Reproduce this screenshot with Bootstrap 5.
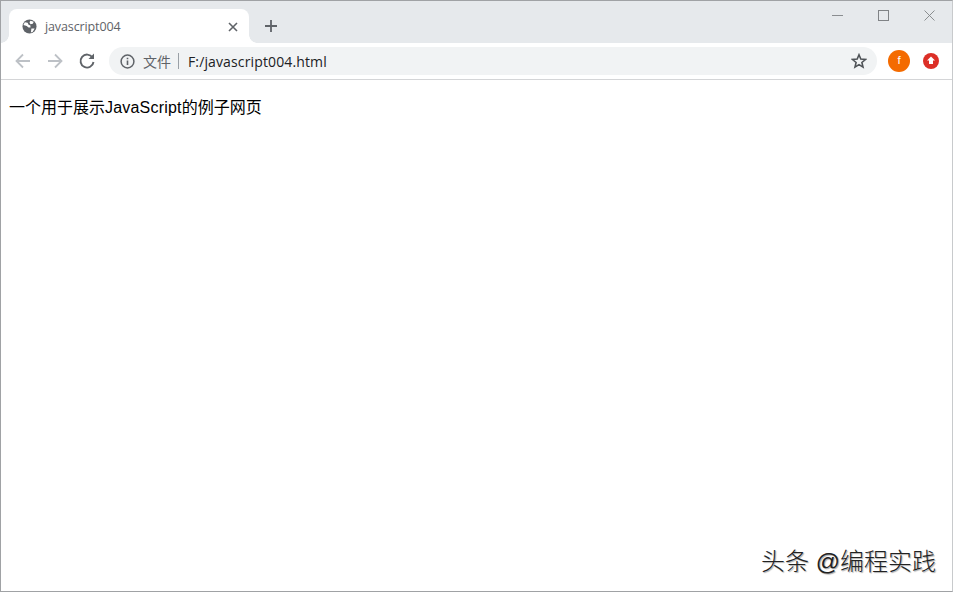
<!DOCTYPE html>
<html lang="zh">
<head>
<meta charset="utf-8">
<title>javascript004</title>
<link href="https://cdn.jsdelivr.net/npm/bootstrap@5.3.0/dist/css/bootstrap.min.css" rel="stylesheet">
<style>
html,body{height:100%;overflow:hidden}
body{font-family:"Liberation Sans","Noto Sans CJK SC",sans-serif;background:#fff;color:#000}
.win-frame{height:592px;border:1px solid #a0a2a5;border-right-color:#c8cacc}
.tab-strip{height:42px;background:#e6e9ec;padding-left:8px}
.tab-shape{position:relative;width:240px;height:34px;margin-top:8px;background:#fff;border-radius:8px 8px 0 0;padding:2px 11px 0 13px;color:#5f6368;font-size:12.5px;font-family:"Open Sans","Liberation Sans",sans-serif}
.tab-shape::before,.tab-shape::after{content:"";position:absolute;bottom:0;width:8px;height:8px}
.tab-shape::before{left:-8px;background:radial-gradient(circle at 0 0,#e6e9ec 7.5px,#fff 8px)}
.tab-shape::after{right:-8px;background:radial-gradient(circle at 100% 0,#e6e9ec 7.5px,#fff 8px)}
.tab-name{margin-left:8px;letter-spacing:-.12px}
.tab-globe{margin-top:-2px}
.plus-btn{margin-left:13px;margin-top:16px}
.win-btn{width:46px;height:26px;margin-top:1px}
.tool-bar{height:37px;background:#fff;border-bottom:1px solid #d4d5d7;padding-left:11px}
.nav-ic{width:22px;height:22px;margin-right:10px}
.omni-box{width:768px;height:28px;margin-left:1px;background:#f1f3f4;border-radius:14px;padding:0 10px 0 10px;font-family:"Open Sans","Liberation Sans","Noto Sans CJK SC",sans-serif}
.info-ic{margin-left:1px}
.info-label{font-size:14px;color:#5f6368;margin-left:8px;font-family:"Noto Sans CJK SC",sans-serif}
.omni-sep{width:1px;height:16px;background:#9aa0a6;margin:0 9px 0 7px}
.url-text{font-size:14px;color:#202124;letter-spacing:.13px}
.ext-orange{width:22px;height:22px;border-radius:50%;background:#f46b00;color:#fff;font-size:11.500px;margin-left:11px}
.ext-red{margin-left:13px;margin-right:12px}
.page-area{padding:18px 8px 0 8px}
.page-line{font-size:16px;line-height:20px}
.latin-text{letter-spacing:.2px}
.mark-water{font-size:24px;font-weight:300;line-height:30px;color:#222;padding:0 8px 14px 0;text-shadow:1px 1px 1px #aaa}
</style>
</head>
<body class="m-0">
<div class="win-frame d-flex flex-column">
  <div class="tab-strip d-flex align-items-start">
    <div class="tab-shape d-flex align-items-center">
      <svg class="tab-globe" width="15" height="15" viewBox="0 0 16 16"><circle cx="8" cy="8" r="7.500" fill="#5f6368"/><path d="M3 3.500l3 .5 1 2 2 1v2H7L5 7.500 1.500 6.500zM9 1.800l3.500 1-1 2.200-2.500.5-1-2zM10 10h3.500l-2 3.500-2 1z" fill="#fff"/></svg>
      <span class="tab-name">javascript004</span>
      <svg class="ms-auto" width="10" height="10" viewBox="0 0 10 10"><path d="M1 1l8 8M9 1l-8 8" stroke="#5f6368" stroke-width="1.600"/></svg>
    </div>
    <svg class="plus-btn" width="18" height="18" viewBox="0 0 18 18"><path d="M9 3v12M3 9h12" stroke="#5f6368" stroke-width="1.800"/></svg>
    <div class="d-flex ms-auto">
      <div class="win-btn d-flex align-items-center justify-content-center"><svg width="11" height="11" viewBox="0 0 11 11"><path d="M0 5.500h11" stroke="#8a8d90"/></svg></div>
      <div class="win-btn d-flex align-items-center justify-content-center"><svg width="11" height="11" viewBox="0 0 11 11"><rect x=".5" y=".5" width="10" height="10" fill="none" stroke="#808386"/></svg></div>
      <div class="win-btn d-flex align-items-center justify-content-center"><svg width="11" height="11" viewBox="0 0 11 11"><path d="M.5.5l10 10M10.500.5l-10 10" stroke="#808386" stroke-width=".9"/></svg></div>
    </div>
  </div>
  <div class="tool-bar d-flex align-items-center">
    <svg class="nav-ic" viewBox="0 0 22 22"><path d="M18 11H5M11 4.500L4.500 11l6.500 6.500" fill="none" stroke="#bdc1c6" stroke-width="1.800"/></svg>
    <svg class="nav-ic" viewBox="0 0 22 22"><path d="M4 11h13M11 4.500l6.500 6.500L11 17.500" fill="none" stroke="#bdc1c6" stroke-width="1.800"/></svg>
    <svg class="nav-ic" viewBox="0 0 22 22"><path d="M16.500 7.500A6.500 6.500 0 1 0 17.500 12" fill="none" stroke="#5f6368" stroke-width="1.900"/><path d="M18 3.500v5.500h-5.500z" fill="#5f6368"/></svg>
    <div class="omni-box d-flex align-items-center">
      <svg class="info-ic" width="15" height="15" viewBox="0 0 15 15"><circle cx="7.500" cy="7.500" r="6.400" fill="none" stroke="#5f6368" stroke-width="1.500"/><path d="M7.500 6.500v4.500M7.500 3.800v1.500" stroke="#5f6368" stroke-width="1.600"/></svg>
      <span class="info-label">文件</span><span class="omni-sep"></span>
      <span class="url-text">F:/javascript004.html</span>
      <svg class="ms-auto" width="16" height="16" viewBox="0 0 16 16"><path d="M8 1.800l1.800 4.300 4.600.4-3.500 3 1.100 4.600L8 11.600l-4 2.500 1.100-4.600-3.500-3 4.600-.4z" fill="none" stroke="#4f5357" stroke-width="1.600"/></svg>
    </div>
    <div class="ext-orange d-flex align-items-center justify-content-center">f</div>
    <svg class="ext-red" width="16" height="16" viewBox="0 0 16 16"><circle cx="8" cy="8" r="8" fill="#dc2f27"/><path d="M8 3.500l4 4H10v3.500H6V7.500H4z" fill="#fff"/></svg>
  </div>
  <div class="page-area flex-grow-1 d-flex flex-column">
    <p class="page-line m-0">一个用于展示<span class="latin-text">JavaScript</span>的例子网页</p>
    <div class="mark-water mt-auto align-self-end">头条 @编程实践</div>
  </div>
</div>
<script src="https://cdn.jsdelivr.net/npm/bootstrap@5.3.0/dist/js/bootstrap.bundle.min.js"></script>
</body>
</html>
